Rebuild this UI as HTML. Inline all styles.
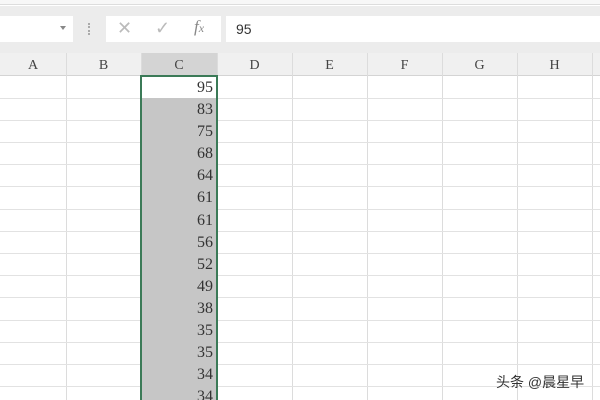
<!DOCTYPE html><html style="overflow:hidden;height:400px"><head><style>
body{margin:0;width:600px;height:400px;overflow:hidden;background:#fff;font-family:"Liberation Serif",serif;position:relative}
div{position:absolute;box-sizing:border-box}
.num{font-size:15px;color:#333;text-align:right;padding-right:4px}
.hd{font-size:14px;color:#444;text-align:center;top:53px;height:23px;line-height:25px}
</style></head><body>
<div style="left:0;top:0;width:600px;height:5px;background:#f7f7f7;border-bottom:1px solid #ddd"></div>
<div style="left:0;top:6px;width:600px;height:47px;background:#ececec"></div>
<div style="left:0;top:16px;width:73px;height:26px;background:#fff"></div>
<div style="left:60px;top:26px;width:0;height:0;border-left:3px solid transparent;border-right:3px solid transparent;border-top:4px solid #888"></div>
<div style="left:88px;top:23px;width:2px;height:12px;border-left:2px dotted #aaa"></div>
<div style="left:106px;top:16px;width:115px;height:26px;background:#fff;color:#bbb;font-size:18px;font-family:'Liberation Sans',sans-serif">
<span style="position:absolute;left:11px;top:2px">✕</span><span style="position:absolute;left:49px;top:2px">✓</span><span style="position:absolute;left:88px;top:1px;color:#888;font-style:italic;font-family:'Liberation Serif',serif;font-size:17px">f<span style="font-size:12px">x</span></span></div>
<div style="left:226px;top:16px;width:374px;height:26px;background:#fff;font-family:'Liberation Sans',sans-serif;font-size:14px;color:#333;padding:5px 10px">95</div>
<div style="left:0;top:53px;width:600px;height:23px;background:#f0f0f0;border-bottom:1px solid #d4d4d4"></div>
<div style="left:141px;top:53px;width:76px;height:23px;background:#d4d4d4"></div>
<div class="hd" style="left:0;width:66px">A</div><div class="hd" style="left:66px;width:75px">B</div><div class="hd" style="left:141px;width:76px">C</div><div class="hd" style="left:217px;width:75px">D</div><div class="hd" style="left:292px;width:75px">E</div><div class="hd" style="left:367px;width:75px">F</div><div class="hd" style="left:442px;width:75px">G</div><div class="hd" style="left:517px;width:75px">H</div>
<svg style="position:absolute;left:0;top:53px" width="600" height="347">
<g stroke="#dcdcdc" stroke-width="1">
<line x1="66.5" y1="0" x2="66.5" y2="347"/><line x1="141.5" y1="0" x2="141.5" y2="347"/><line x1="217.5" y1="0" x2="217.5" y2="347"/><line x1="292.5" y1="0" x2="292.5" y2="347"/><line x1="367.5" y1="0" x2="367.5" y2="347"/><line x1="442.5" y1="0" x2="442.5" y2="347"/><line x1="517.5" y1="0" x2="517.5" y2="347"/><line x1="592.5" y1="0" x2="592.5" y2="347"/>
</g>
<g stroke="#e2e2e2"><line x1="0" y1="45.5" x2="600" y2="45.5"/><line x1="0" y1="67.5" x2="600" y2="67.5"/><line x1="0" y1="89.5" x2="600" y2="89.5"/><line x1="0" y1="111.5" x2="600" y2="111.5"/><line x1="0" y1="133.5" x2="600" y2="133.5"/><line x1="0" y1="156.5" x2="600" y2="156.5"/><line x1="0" y1="178.5" x2="600" y2="178.5"/><line x1="0" y1="200.5" x2="600" y2="200.5"/><line x1="0" y1="222.5" x2="600" y2="222.5"/><line x1="0" y1="244.5" x2="600" y2="244.5"/><line x1="0" y1="267.5" x2="600" y2="267.5"/><line x1="0" y1="289.5" x2="600" y2="289.5"/><line x1="0" y1="311.5" x2="600" y2="311.5"/><line x1="0" y1="333.5" x2="600" y2="333.5"/></g>
</svg>
<div style="left:141px;top:98px;width:76px;height:302px;background:#c6c6c6"></div>
<div style="left:140px;top:75px;width:78px;height:330px;border:2px solid #3b7a57"></div>
<div class="num" style="left:141px;top:77px;width:76px;height:323px;overflow:hidden;line-height:22.1px;font-size:16px">95<br>83<br>75<br>68<br>64<br>61<br>61<br>56<br>52<br>49<br>38<br>35<br>35<br>34<br>34</div>
<div style="left:496px;top:372px;font-family:'Liberation Sans','Noto Sans CJK SC',sans-serif;font-size:14px;color:#333">头条 @晨星早</div>
</body></html>
